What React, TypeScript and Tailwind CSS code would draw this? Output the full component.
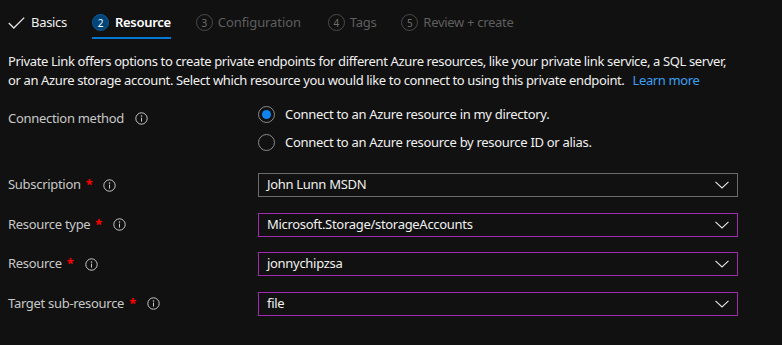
import React from "react";

const font = { fontFamily: '"Segoe UI", "Noto Sans", "Open Sans", sans-serif' };

function Info() {
  return (
    <svg width="13" height="13" viewBox="0 0 13 13" className="shrink-0">
      <circle cx="6.5" cy="6.5" r="5.7" fill="none" stroke="#c8c8c8" strokeWidth="1" />
      <circle cx="6.5" cy="4" r="0.8" fill="#c8c8c8" />
      <rect x="6" y="5.6" width="1" height="4" fill="#c8c8c8" />
    </svg>
  );
}

function Chevron() {
  return (
    <svg width="14" height="8" viewBox="0 0 14 8" className="shrink-0">
      <path d="M0.5 0.8 L7 7 L13.5 0.8" fill="none" stroke="#e6e6e6" strokeWidth="1.1" />
    </svg>
  );
}

function StepCircle({ n, active }: { n: number; active?: boolean }) {
  return active ? (
    <span className="w-[17px] h-[17px] rounded-full bg-[#004578] border border-[#0e5a9c] flex items-center justify-center text-[10px] text-white leading-none tracking-normal">
      {n}
    </span>
  ) : (
    <span className="w-[17px] h-[17px] rounded-full border border-[#4a4a4a] flex items-center justify-center text-[10px] text-[#6e6e6e] leading-none tracking-normal">
      {n}
    </span>
  );
}

function Label({ text, required }: { text: string; required?: boolean }) {
  return (
    <div className="flex items-center text-[#c8c8c8]">
      <span>{text}</span>
      {required && <span className="text-[#ff0000] ml-[5px] font-bold">*</span>}
      <span className="ml-[11px]"><Info /></span>
    </div>
  );
}

function Select({ value, purple }: { value: string; purple?: boolean }) {
  return (
    <div
      className={`w-[480px] h-[24px] border flex items-center justify-between pl-[8px] pr-[8px] text-[#f0f0f0] ${
        purple ? "border-[#a22ab0]" : "border-[#6b6b6b]"
      }`}
    >
      <span>{value}</span>
      <Chevron />
    </div>
  );
}

export default function App() {
  return (
    <div className="w-[782px] h-[345px] bg-[#111111] text-[13px] overflow-hidden tracking-[-0.3px]" style={font}>
      <div className="flex items-center h-[45px] pl-[8px]">
        <div className="flex items-center h-[45px] gap-[6px]">
          <svg width="17" height="12" viewBox="0 0 17 12">
            <path d="M0.8 6 L5.8 11 L16.2 0.6" fill="none" stroke="#e6e6e6" strokeWidth="1.3" />
          </svg>
          <span className="text-[#f0f0f0]">Basics</span>
        </div>
        <div className="ml-[25px] relative flex items-center h-[45px] gap-[6px]">
          <StepCircle n={2} active />
          <span className="text-white font-semibold">Resource</span>
          <div className="absolute left-0 right-0 bottom-[6px] h-[2px] bg-[#0078d4]" />
        </div>
        <div className="ml-[25px] flex items-center gap-[5px]">
          <StepCircle n={3} />
          <span className="text-[#5e5e5e] tracking-[-0.1px]">Configuration</span>
        </div>
        <div className="ml-[27px] flex items-center gap-[5px]">
          <StepCircle n={4} />
          <span className="text-[#5e5e5e]">Tags</span>
        </div>
        <div className="ml-[25px] flex items-center gap-[5px]">
          <StepCircle n={5} />
          <span className="text-[#5e5e5e]">Review + create</span>
        </div>
      </div>

      <div className="px-[8px] pt-[7px]">
        <p className="text-[#f0f0f0] leading-[19px] w-[770px] tracking-[-0.37px]">
          Private Link offers options to create private endpoints for different Azure resources, like your private link
          service, a SQL server,
          <br />
          or an Azure storage account. Select which resource you would like to connect to using this private endpoint.
          <span className="ml-[8px] text-[#3aa0f3]">Learn more</span>
        </p>

        <div className="flex mt-[13px]">
          <div className="w-[250px] pt-[6px]">
            <Label text="Connection method" />
          </div>
          <div className="flex flex-col gap-[8px] pt-[2px]">
            <div className="flex items-center gap-[10px]">
              <span className="w-[17px] h-[17px] rounded-full border border-[#8a8a8a] flex items-center justify-center">
                <span className="w-[9px] h-[9px] rounded-full bg-[#0f83f0]" />
              </span>
              <span className="text-[#f0f0f0]">Connect to an Azure resource in my directory.</span>
            </div>
            <div className="flex items-center gap-[10px]">
              <span className="w-[17px] h-[17px] rounded-full border border-[#8a8a8a]" />
              <span className="text-[#f0f0f0]">Connect to an Azure resource by resource ID or alias.</span>
            </div>
          </div>
        </div>

        <div className="flex flex-col gap-[15.5px] mt-[21px]">
          <div className="flex items-center">
            <div className="w-[250px]"><Label text="Subscription" required /></div>
            <Select value="John Lunn MSDN" />
          </div>
          <div className="flex items-center">
            <div className="w-[250px]"><Label text="Resource type" required /></div>
            <Select value="Microsoft.Storage/storageAccounts" purple />
          </div>
          <div className="flex items-center">
            <div className="w-[250px]"><Label text="Resource" required /></div>
            <Select value="jonnychipzsa" purple />
          </div>
          <div className="flex items-center">
            <div className="w-[250px]"><Label text="Target sub-resource" required /></div>
            <Select value="file" purple />
          </div>
        </div>
      </div>
    </div>
  );
}
